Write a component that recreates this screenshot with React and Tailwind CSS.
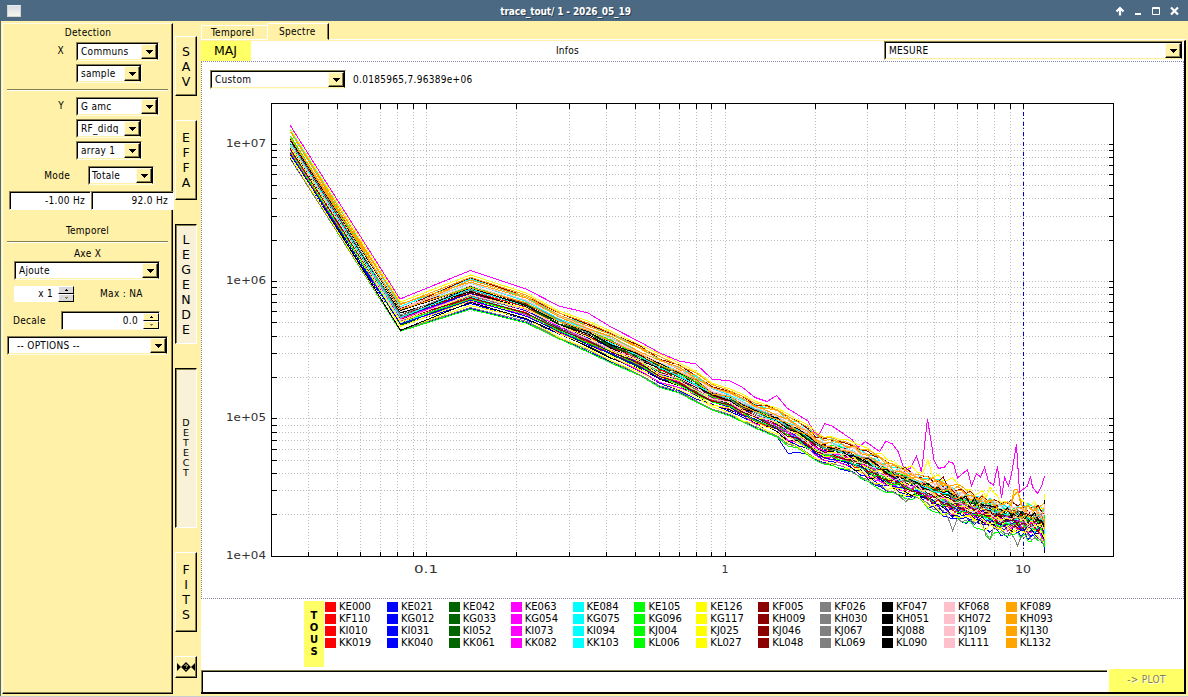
import React from "react";

/* ---------- plot geometry ---------- */
const X10 = 1023.4;
const DX = 298.5;
const Y4 = 556;
const DY = 137.25;
const LEFT = 271.5;
const RIGHT = 1113.5;
const TOP = 103.5;
const BOTTOM = 556.5;
const xOf = (f) => Math.round(X10 + DX * (Math.log10(f) - 1)) + 0.5;
const yOf = (v) => Math.floor(Y4 - DY * (Math.log10(v) - 4)) + 0.5;

const X_TICKS = [];
for (const dec of [0.01, 0.1, 1]) {
  for (let k = 2; k <= 10; k++) {
    const f = dec * k;
    if (f > 0.035) X_TICKS.push(f);
  }
}
const Y_TICKS = [];
for (const dec of [1e4, 1e5, 1e6]) {
  for (let k = 2; k <= 10; k++) Y_TICKS.push(dec * k);
}

const COLORS = ["#ff0000", "#0000ff", "#006400", "#ff00ff", "#00ffff", "#00ff00", "#ffff00", "#8b0000", "#808080", "#000000", "#ffc0cb", "#ffa500"];

/* upper and lower limits of the bundle of traces: [x, top, bottom] */
const BAND = [
  [290.5, 129, 160], [400.5, 302, 332], [470.5, 275, 309.5], [526, 293, 323], [559, 311, 339],
  [588, 321, 352], [611, 331, 363], [640, 345, 376], [660, 354, 387.5], [679, 363, 393],
  [696, 371, 402], [712, 383, 410], [730, 389, 416], [742, 394, 422], [755, 401, 428],
  [767, 405, 433], [777, 408, 437], [788, 414, 446], [798, 420, 448], [808, 425, 455],
  [820, 436, 463], [840, 438, 468], [857, 444, 475], [873, 451, 485], [887, 458, 491],
  [904, 468, 497], [920, 473, 500], [930, 476, 508], [940, 477, 513], [953, 483, 519],
  [971, 492, 523], [987, 495, 528], [1000, 500, 534], [1016, 501, 534], [1030, 504, 538],
  [1040, 506, 540], [1044.5, 504, 546],
];

function band(x) {
  for (let i = 1; i < BAND.length; i++) {
    if (x <= BAND[i][0]) {
      const [x0, t0, b0] = BAND[i - 1];
      const [x1, t1, b1] = BAND[i];
      const k = (x - x0) / (x1 - x0);
      return [t0 + (t1 - t0) * k, b0 + (b1 - b0) * k];
    }
  }
  return BAND[BAND.length - 1].slice(1);
}

const XS = BAND.map((b) => b[0]).filter((x) => x <= 808);
for (let x = 816; x < 1044; ) {
  XS.push(x);
  x += Math.max(3.4, 8 - (x - 816) / 40);
}
XS.push(1044.5);

/* place of each trace in the bundle, -1 = top, 1 = bottom; one row per legend line */
const PLACES = [
  [0.02, 0.95, -0.1, -1.1, -0.72, 1.0, -1.0, -0.8, 0.9, -0.22, -0.5, -0.86],
  [0.26, 0.7, 0.18, 0.45, -0.5, 0.08, 0.8, -0.3, 0.22, 0.6, -0.38, -0.7],
  [-0.15, 0.1, 0.34, 0.55, 0.28, -0.3, 0.5, 0.04, -0.12, -0.04, -0.55, -0.6],
  [0.38, 0.46, -0.2, 0.14, -0.2, 0.4, 0.14, 0.3, -0.3, -0.28, 0.1, -0.3],
];

const MAGENTA_TOP = [
  [290, 125], [400, 299], [470.5, 270.5], [526, 289], [559, 306], [588, 313], [611, 327], [640, 342], [660, 353],
  [679, 361], [696, 364], [712, 379], [730, 381], [742, 387], [755, 397.5], [767, 401.5], [776.5, 395.5], [787, 408],
  [808, 421], [814, 432], [819, 435], [825, 423.5], [832, 426], [852, 439.5], [858, 447.5], [865.5, 441.5],
  [879.5, 451.5], [886, 441], [892.5, 444], [898.5, 452], [904.5, 471], [910.5, 468], [916.5, 456.5], [921.5, 472],
  [927.5, 419], [934, 460], [938.5, 468.5], [944.5, 467], [949, 461.5], [953.5, 463.5], [957.5, 478], [967.5, 469.5],
  [971.5, 486], [976.5, 473.5], [980.5, 477], [984.5, 467.5], [988.5, 481.5], [993.5, 485], [997.5, 466.5],
  [1001.5, 498], [1004.5, 477.5], [1008.5, 486], [1012, 471.5], [1016.5, 444.5], [1019.5, 492], [1027.5, 486],
  [1030.5, 476.5], [1032.5, 487], [1037.5, 493.5], [1042, 485], [1044.5, 476],
];

function makeRandom(seed) {
  let s = seed;
  return () => {
    s = (s * 1664525 + 1013904223) >>> 0;
    return s / 4294967296 - 0.5;
  };
}

/* single excursions: trace key -> [x, dy] */
const SPIKES = {
  "0-6": [[927, -17], [910, -5], [1016, -9], [953, -6], [992, -8]],
  "0-11": [[1016, -14]],
  "1-11": [[1016, -11]],
  "0-8": [[953, 15], [988.5, 14], [1016, 10], [905, 5]],
  "0-5": [[988.5, 8]],
  "0-1": [[788, 8], [798, 5]],
};

function tracePoints(row, col) {
  const rnd = makeRandom(row * 977 + col * 131 + 17);
  for (let i = 0; i < 5; i++) rnd();
  const place = PLACES[row][col];
  const spikes = SPIKES[`${row}-${col}`] || [];
  const edge = Math.abs(place) > 0.84 ? 0.2 : 1;
  return XS.map((x) => {
    const [t, b] = band(x);
    const mid = (t + b) / 2;
    const half = (b - t) / 2;
    const loose = x < 410 ? 0.6 : x < 600 ? 0.25 : 0.3;
    const p = Math.max(-1, Math.min(1, place + rnd() * loose * edge));
    let y = mid + half * p;
    if (x > 815) y += rnd() * Math.min(8, 2 + (x - 815) / 30);
    for (const [sx, dy] of spikes) if (Math.abs(sx - x) < 2.6) y += dy;
    return `${x},${y.toFixed(1)}`;
  }).join(" ");
}

const TRACES = [];
for (let row = 0; row < 4; row++) {
  for (let col = 0; col < 12; col++) {
    TRACES.push({
      key: `${row}-${col}`,
      color: COLORS[col],
      points: row === 0 && col === 3 ? MAGENTA_TOP.map((p) => p.join(",")).join(" ") : tracePoints(row, col),
    });
  }
}

const LAST_SAMPLES = [
  [494, 500, "#ffff00"], [500, 504, "#000000"], [504, 515, "#ffc0cb"], [515, 519, "#00ff00"], [519, 529, "#ffa500"],
  [529, 534, "#00ffff"], [534, 539, "#ffff00"], [539, 547, "#00ff00"], [547, 550, "#0000ff"], [550, 553, "#000000"],
];

function Spectrum() {
  return (
    <svg width="981" height="506" viewBox="202 92 981 506" className="block" shapeRendering="crispEdges" fill="none">
      <g stroke="#bebebe" strokeDasharray="1 2">
        {X_TICKS.map((f, i) => <path key={i} d={`M${xOf(f)} ${TOP + 5.5}V${BOTTOM - 5}`} />)}
        {Y_TICKS.map((v, i) => <path key={i} d={`M${LEFT + 4.5} ${yOf(v)}H${RIGHT - 5}`} />)}
      </g>
      <path d="M1023.5 112V551" stroke="#0000cd" strokeDasharray="4 2 1 3" />
      {TRACES.map((t) => <polyline key={t.key} points={t.points} stroke={t.color} />)}
      {LAST_SAMPLES.map(([a, b, c]) => <path key={a} d={`M1044.5 ${a}V${b}`} stroke={c} />)}
      <g stroke="#000">
        <rect x={LEFT} y={TOP} width={RIGHT - LEFT} height={BOTTOM - TOP} />
        {X_TICKS.map((f, i) => <path key={i} d={`M${xOf(f)} ${TOP}v5M${xOf(f)} ${BOTTOM}v-5`} />)}
        {Y_TICKS.map((v, i) => <path key={i} d={`M${LEFT} ${yOf(v)}h5M${RIGHT} ${yOf(v)}h-5`} />)}
      </g>
      <g fill="#333" className="text-[11px] tracking-normal font-['DejaVu_Sans',sans-serif]">
        <text x="226" y="147" textLength="40" lengthAdjust="spacingAndGlyphs">1e+07</text>
        <text x="226" y="284" textLength="40" lengthAdjust="spacingAndGlyphs">1e+06</text>
        <text x="226" y="421" textLength="40" lengthAdjust="spacingAndGlyphs">1e+05</text>
        <text x="226" y="559" textLength="40" lengthAdjust="spacingAndGlyphs">1e+04</text>
        <text x="414" y="573" textLength="24" lengthAdjust="spacingAndGlyphs">0.1</text>
        <text x="721.5" y="573">1</text>
        <text x="1015" y="573" textLength="16" lengthAdjust="spacingAndGlyphs">10</text>
      </g>
    </svg>
  );
}

/* ---------- widgets ---------- */
function Arrow() {
  return (
    <span className="flex w-4 shrink-0 items-center justify-center border border-t-[#fffce6] border-l-[#fffce6] border-r-black border-b-black bg-[#fff1a8] shadow-[inset_-1px_-1px_0_#857c50]">
      <svg width="7" height="4" viewBox="0 0 7 4" shapeRendering="crispEdges"><path d="M0 0H7V1H6V2H5V3H4V4H3V3H2V2H1V1H0Z" /></svg>
    </span>
  );
}

function Combo({ className, children, pad = "pl-[3px]" }) {
  return (
    <div className={`flex h-[19px] shrink-0 border border-t-[#857c50] border-l-[#857c50] border-r-[#fffce6] border-b-[#fffce6] bg-white ${className}`}>
      <div className="flex min-w-0 flex-1 border border-t-black border-l-black border-r-black border-b-[#fff1a8]">
        <span className={`flex-1 truncate leading-[15px] ${pad}`}>{children}</span>
        <Arrow />
      </div>
    </div>
  );
}

function NumberBox({ className, children }) {
  return (
    <div className={`h-[19px] border border-t-[#857c50] border-l-[#857c50] border-r-white border-b-white bg-white ${className}`}>
      <div className="h-[17px] border-t border-l border-black pr-[5px] text-right leading-[16px]">{children}</div>
    </div>
  );
}

function Spin({ tone }) {
  return (
    <span className="flex w-4 shrink-0 flex-col">
      {[0, 1].map((i) => (
        <span key={i} className={`flex h-2 items-center justify-center border border-t-white border-l-white border-r-black border-b-black ${tone}`}>
          <svg width="3" height="2" viewBox="0 0 3 2" shapeRendering="crispEdges">
            <path d={i ? "M0 0H3V1H2V2H1V1H0Z" : "M1 0H2V1H3V2H0V1H1Z"} fill={i ? "#857c50" : "#000"} />
          </svg>
        </span>
      ))}
    </span>
  );
}

function Rule() {
  return <div className="mx-1 h-[2px] shrink-0 border-t border-b border-t-[#857c50] border-b-white" />;
}

/* one-pixel checkerboard that fills a pressed button */
function Stipple({ id }) {
  return (
    <svg className="absolute inset-px h-[calc(100%-1px)] w-[calc(100%-1px)]" shapeRendering="crispEdges">
      <pattern id={id} width="2" height="2" patternUnits="userSpaceOnUse">
        <rect width="2" height="2" fill="#fff1b8" />
        <path d="M0 0h1v1h-1zM1 1h1v1h-1z" fill="#f2f2f6" />
      </pattern>
      <rect width="100%" height="100%" fill={`url(#${id})`} />
    </svg>
  );
}

function SideButton({ text, className, pressed, small }) {
  const look = pressed
    ? "border-t-black border-l-black border-r-white border-b-white shadow-[inset_1px_1px_0_#857c50]"
    : "border-t-white border-l-white border-r-black border-b-black shadow-[inset_-1px_-1px_0_#857c50]";
  return (
    <div className={`relative flex w-[22px] shrink-0 flex-col items-center justify-center border bg-[#fff1a8] ${look} ${className}`}>
      {pressed && <Stipple id={`stipple-${text}`} />}
      {text.split("").map((c, i) => (
        <span key={i} className={small ? "relative font-['DejaVu_Sans',sans-serif] text-[9.5px] leading-[10px] tracking-normal" : "relative font-['DejaVu_Sans',sans-serif] text-[12.5px] leading-[15px] tracking-normal"}>{c}</span>
      ))}
    </div>
  );
}

const LEGEND = [
  ["bg-[#ff0000]", "KE000", "KF110", "KI010", "KK019"],
  ["bg-[#0000ff]", "KE021", "KG012", "KI031", "KK040"],
  ["bg-[#006400]", "KE042", "KG033", "KI052", "KK061"],
  ["bg-[#ff00ff]", "KE063", "KG054", "KI073", "KK082"],
  ["bg-[#00ffff]", "KE084", "KG075", "KI094", "KK103"],
  ["bg-[#00ff00]", "KE105", "KG096", "KJ004", "KL006"],
  ["bg-[#ffff00]", "KE126", "KG117", "KJ025", "KL027"],
  ["bg-[#8b0000]", "KF005", "KH009", "KJ046", "KL048"],
  ["bg-[#808080]", "KF026", "KH030", "KJ067", "KL069"],
  ["bg-[#000000]", "KF047", "KH051", "KJ088", "KL090"],
  ["bg-[#ffc0cb]", "KF068", "KH072", "KJ109", "KL111"],
  ["bg-[#ffa500]", "KF089", "KH093", "KJ130", "KL132"],
];

function TitleBar() {
  return (
    <header className="flex h-[21px] shrink-0 items-center bg-[#4c6983] text-white">
      <span className="ml-[7px] h-3 w-[14px] border border-[#d5d5cc] border-t-[#ededf0] bg-linear-to-b from-[#d8dce4] to-[#f6f6ee]" />
      <span className="flex-1 pt-[2px] pr-[57px] text-center font-['DejaVu_Sans_Condensed','DejaVu_Sans',sans-serif] text-[10px] font-bold tracking-[-0.12px] [text-shadow:1px_1px_0_#2b3d4e]">
        trace_tout/ 1 - 2026_05_19
      </span>
      <svg width="74" height="21" viewBox="0 0 74 21" fill="none" stroke="#fff" className="-ml-[53px]">
        <path d="M6 15.500V9M2.500 11.500L6 8L9.500 11.500" strokeWidth="2.200" />
        <path d="M21 14h6" strokeWidth="2" />
        <path d="M38.500 7.500h7v7h-7zM38 8.500h8" />
        <path d="M57 7.500l7 7M64 7.500l-7 7" strokeWidth="2.200" />
      </svg>
    </header>
  );
}

function LeftPanel() {
  return (
    <aside className="mt-[2px] ml-[1px] flex h-[671px] w-[171px] shrink-0 flex-col border border-t-[#fffce6] border-l-[#fffce6] border-r-black border-b-black shadow-[inset_-1px_-1px_0_#857c50]">
      <div className="h-[18px] pl-[1px] text-center leading-[17px]">Detection</div>
      <div className="flex h-[22px] items-start"><span className="w-[73px] pr-[12px] text-right leading-[18px]">X</span><Combo className="w-[83px]">Communs</Combo></div>
      <Combo className="ml-[73px] w-[66px]">sample</Combo>
      <div className="h-[6px]" />
      <Rule />
      <div className="h-[6px]" />
      <div className="flex h-[22px] items-start"><span className="w-[73px] pr-[12px] text-right leading-[18px]">Y</span><Combo className="w-[83px]">G amc</Combo></div>
      <Combo className="mb-[3px] ml-[73px] w-[66px]">RF_didq</Combo>
      <Combo className="mb-[6px] ml-[73px] w-[66px]">array 1</Combo>
      <div className="flex h-[25px] items-start"><span className="w-[85px] pr-[18px] text-right leading-[19px]">Mode</span><Combo className="w-[66px]" pad="pl-[2px]">Totale</Combo></div>
      <div className="-mr-[2px] ml-[6px] flex h-[31px]"><NumberBox className="w-[82px]">-1.00 Hz</NumberBox><NumberBox className="w-[83px]">92.0 Hz</NumberBox></div>
      <div className="h-[19px] text-center leading-[17px]">Temporel</div>
      <Rule />
      <div className="h-[17px] pt-[3px] text-center leading-[16px]">Axe X</div>
      <Combo className="mt-[1px] ml-[11px] w-[146px]">Ajoute</Combo>
      <div className="mt-[6px] flex h-4">
        <div className="ml-[11px] flex w-[60px] bg-white"><span className="flex-1 pr-[5px] text-right leading-[15px]">x 1</span><Spin tone="bg-[#d9d9d9]" /></div>
        <span className="ml-[26px] leading-[15px]">Max : NA</span>
      </div>
      <div className="mt-[9px] flex h-[25px]">
        <span className="w-[47px] pl-[10px] leading-[19px]">Decale</span>
        <div className="ml-[11px] flex h-[19px] w-[99px] border border-t-[#857c50] border-l-[#857c50] border-r-[#fffce6] border-b-[#fffce6] bg-white">
          <div className="flex flex-1 border-t border-l border-black"><span className="flex-1 pr-[5px] text-right leading-[16px]">0.0</span><Spin tone="bg-[#fff1a8]" /></div>
        </div>
      </div>
      <Combo className="ml-[4px] w-[161px]" pad="pl-[8px]">-- OPTIONS --</Combo>
    </aside>
  );
}

export default function App() {
  return (
    <div className="flex h-[697px] w-[1188px] flex-col overflow-hidden border-b border-[#c9cbd0] bg-[#fff1a8] font-['DejaVu_Sans_Condensed','DejaVu_Sans',sans-serif] text-[10px] leading-[15px] tracking-[0.3px] whitespace-nowrap text-black">
      <TitleBar />
      <div className="flex min-h-0 flex-1 border-l border-[#4c6983]">
        <LeftPanel />
        <nav className="flex w-7 shrink-0 flex-col pt-[15px] pl-[2px]">
          <SideButton text="SAV" className="mb-6 h-[60px]" />
          <SideButton text="EFFA" className="mb-6 h-[80px]" />
          <SideButton text="LEGENDE" pressed className="mb-6 h-[120px]" />
          <SideButton text="DETECT" pressed small className="mb-6 h-[160px]" />
          <SideButton text="FITS" className="mb-6 h-[80px]" />
          <div className="flex h-[22px] w-[22px] items-center border border-t-white border-l-white border-r-black border-b-black pl-[1px] shadow-[inset_-1px_-1px_0_#857c50]">
            <svg width="18" height="10" viewBox="0 0 18 10">
              <path d="M0 1L4 5L0 9ZM9 0L14 5L9 10L4 5ZM18 1L14 5L18 9Z" />
              <path d="M7.500 3.500Q9 2 10.500 3.500Q10.500 4.500 9 5.500M9 7v1" stroke="#fff1a8" fill="none" />
            </svg>
          </div>
        </nav>
        <main className="flex w-[985px] shrink-0 flex-col pb-[2px]">
          <div className="flex h-[19px] shrink-0 items-end border-b border-white">
            <div className="h-[14px] w-[66px] rounded-tl-[2px] border-t border-l border-white pl-[9px] leading-[13px]">Temporel</div>
            <div className="-mb-[1px] h-[17px] w-[62px] rounded-tl-[2px] border border-t-white border-r-black border-b-[#fff1a8] border-l-white pl-[11px] leading-[16px] shadow-[inset_-1px_0_0_#857c50]">Spectre</div>
          </div>
          <div className="flex min-h-0 flex-1 flex-col border-t border-r-2 border-b-2 border-t-[#fff1a8] border-r-black border-b-black bg-white">
            <div className="flex h-5 shrink-0">
              <div className="w-[50px] bg-[#ffff66] pl-[13px] font-['DejaVu_Sans',sans-serif] text-[12.5px] leading-[19px] tracking-normal">MAJ</div>
              <div className="flex-1 text-center leading-[19px]">Infos</div>
              <Combo className="mr-[1px] w-[299px]">MESURE</Combo>
            </div>
            <div className="h-[538px] shrink-0 border border-dotted border-[#8888a8]">
              <div className="flex h-[30px] pt-2 pl-2">
                <Combo className="mr-[7px] w-[136px]">Custom</Combo>
                <span className="leading-[19px]">0.0185965,7.96389e+06</span>
              </div>
              <Spectrum />
            </div>
            <div className="flex h-[70px] shrink-0 pt-[2px] pl-[103px]">
              <div className="flex h-[66px] w-5 flex-col items-center justify-center bg-[#ffff66] font-['DejaVu_Sans',sans-serif] font-bold tracking-normal">
                {"TOUS".split("").map((c) => <span key={c} className="leading-[12px]">{c}</span>)}
              </div>
              {LEGEND.map(([swatch, ...names]) => (
                <div key={swatch} className="w-[61.9px] pl-[1px]">
                  {names.map((n) => (
                    <div key={n} className="flex h-3 items-center font-['DejaVu_Sans',sans-serif] leading-[12px] tracking-normal">
                      <span className={`mr-[3px] h-[11px] w-[11px] border-b border-white ${swatch}`} />{n}
                    </div>
                  ))}
                </div>
              ))}
            </div>
            <div className="flex min-h-0 flex-1">
              <div className="mt-[1px] flex-1 border-t border-l border-[#857c50]"><div className="h-full border-t border-l border-black" /></div>
              <div className="ml-[2px] w-[75px] bg-[#ffff66] text-center leading-[21px] text-[#857c50] [text-shadow:1px_1px_0_#fff]">-&gt; PLOT</div>
            </div>
          </div>
        </main>
      </div>
    </div>
  );
}
